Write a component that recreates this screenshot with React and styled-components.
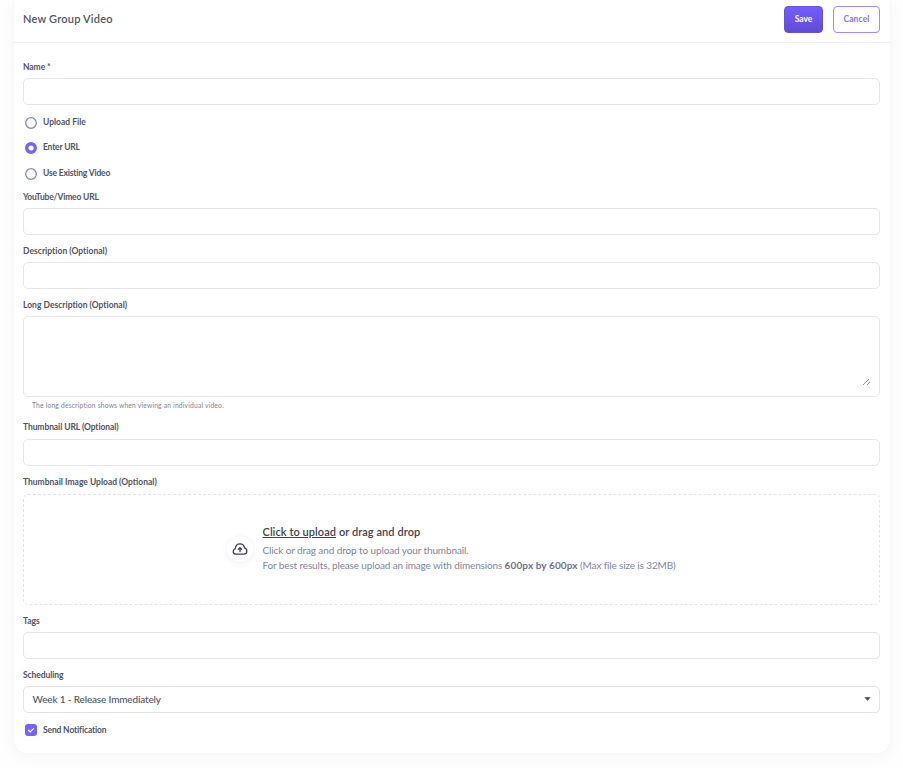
import { useState } from 'react';
import styled, { createGlobalStyle } from 'styled-components';

const GlobalStyle = createGlobalStyle`
  * {
    box-sizing: border-box;
  }
  body {
    margin: 0;
    height: 768px;
    overflow: hidden;
    background-color: #fefefe;
    font-family: Lato, "Liberation Sans", sans-serif;
    color: #505365;
  }
`;

const Card = styled.main`
  width: 878px;
  height: 754px;
  margin-left: 13px;
  background-color: #ffffff;
  border: 1px solid #f7f7f8;
  border-top: 0;
  border-radius: 0 0 14px 14px;
  box-shadow: 0 3px 14px rgba(40, 40, 60, 0.045);
`;

const CardHeader = styled.header`
  height: 43px;
  padding: 0 10px 4px 9px;
  display: flex;
  align-items: center;
  border-bottom: 1px solid #f0f0f2;
`;

const Title = styled.h1`
  flex: 1;
  margin: 0;
  font-size: 11px;
  line-height: 16px;
  font-weight: 600;
  letter-spacing: ${(props) => props.$spacing || 0}px;
`;

const Button = styled.button`
  width: ${(props) => props.$width}px;
  height: 27px;
  margin-left: 10px;
  padding: 0;
  border: 1px solid ${(props) => (props.$primary ? '#6650dd' : '#9c8cff')};
  border-radius: 4px;
  background: ${(props) => (props.$primary ? 'linear-gradient(#755cff, #614cd2)' : '#ffffff')};
  color: ${(props) => (props.$primary ? '#ffffff' : '#8572ff')};
  font-family: inherit;
  font-size: 8.5px;
  font-weight: 700;
  letter-spacing: ${(props) => props.$spacing || 0}px;
`;

const Form = styled.form`
  display: flex;
  flex-direction: column;
  padding: 17px 10px 0 9px;
`;

const Field = styled.div`
  display: flex;
  flex-direction: column;
  margin-bottom: ${(props) => props.$after ?? 9}px;
`;

const Label = styled.label`
  height: 14px;
  margin-bottom: ${(props) => props.$gap ?? 4}px;
  font-size: 8.5px;
  line-height: 14px;
  font-weight: 700;
  letter-spacing: ${(props) => props.$spacing || 0}px;
  white-space: nowrap;
`;

const Input = styled.input`
  width: 100%;
  height: 27px;
  padding: 0 9px;
  border: 1px solid #e6e6ea;
  border-radius: 5px;
  background-color: #ffffff;
  font: inherit;
  font-size: 10px;
  outline: none;
`;

const TextAreaBox = styled.div`
  height: 81px;
  display: flex;
  align-items: flex-end;
  padding: 0 8px 10px 8px;
  border: 1px solid #e6e6ea;
  border-radius: 5px;
`;

const TextArea = styled.textarea`
  flex: 1;
  height: 60px;
  padding: 0;
  border: 0;
  outline: none;
  resize: none;
  background: transparent;
  font: inherit;
  font-size: 10px;
`;

const Help = styled.p`
  margin: 2px 0 0 9px;
  height: 12px;
  font-size: 6.7px;
  line-height: 12px;
  color: #7c8297;
  letter-spacing: ${(props) => props.$spacing || 0}px;
`;

const Options = styled.div`
  display: flex;
  flex-direction: column;
  margin-bottom: 4px;
`;

const Option = styled.label`
  height: ${(props) => props.$height || 25}px;
  display: flex;
  align-items: center;
  gap: 6px;
  padding-left: 2px;
  font-size: 8.5px;
  font-weight: 700;
`;

const OptionText = styled.span`
  line-height: 12px;
  padding-bottom: ${(props) => props.$lift ?? 2}px;
  letter-spacing: ${(props) => props.$spacing || 0}px;
`;

const HiddenInput = styled.input`
  position: absolute;
  opacity: 0;
  pointer-events: none;
`;

const Check = styled.span`
  width: 12px;
  height: 12px;
  display: flex;
  align-items: center;
  justify-content: center;
  border-radius: 3px;
  background-color: #7661fd;
`;

const Dropzone = styled.div`
  height: 111px;
  display: flex;
  align-items: center;
  padding: 0 0 2px 202.5px;
  gap: 10px;
  border: 1px dashed #e4e4e8;
  border-radius: 5px;
`;

const IconCircle = styled.div`
  width: 26px;
  height: 26px;
  flex: none;
  display: flex;
  align-items: center;
  justify-content: center;
  border-radius: 50%;
  background-color: #ffffff;
  box-shadow: 0 1px 6px rgba(40, 40, 60, 0.08);
`;

const UploadText = styled.div`
  font-size: 10px;
  line-height: 15px;
  color: #7f869b;
  white-space: nowrap;
`;

const UploadTitle = styled.p`
  margin: 0 0 4px;
  font-size: 11px;
  line-height: 15px;
  font-weight: 600;
  color: #41434f;
  letter-spacing: ${(props) => props.$spacing || 0}px;
`;

const UploadLine = styled.p`
  margin: 0;
  letter-spacing: ${(props) => props.$spacing || 0}px;

  b {
    font-weight: 700;
    color: #6d7389;
    letter-spacing: 0.1px;
  }
`;

const Underlined = styled.span`
  text-decoration: underline;
  text-underline-offset: 1px;
`;

const Select = styled.div`
  height: 27px;
  display: flex;
  align-items: center;
  justify-content: space-between;
  padding: 0 8px 1px 8.5px;
  border: 1px solid #e2e2ea;
  border-radius: 5px;
  font-size: 10px;
  font-weight: 500;
  letter-spacing: ${(props) => props.$spacing || 0}px;
`;

const choices = [
  { text: 'Upload File', spacing: 0, height: 25 },
  { text: 'Enter URL', spacing: -0.18, height: 26 },
  { text: 'Use Existing Video', spacing: -0.18, height: 25 },
];

const RadioMark = ({ on }) => (
  <svg width="12" height="12" viewBox="0 0 12 12" fill="#ffffff">
    {on ? (
      <circle cx="6" cy="6" r="4.3" stroke="#7661fd" strokeWidth="3.4" />
    ) : (
      <circle cx="6" cy="6" r="5.3" stroke="#858ba3" strokeWidth="1.3" />
    )}
  </svg>
);

const CloudIcon = () => (
  <svg width="16" height="14" viewBox="0 0 16 14" fill="none" stroke="#3f414d" strokeWidth="1.3" strokeLinecap="round" strokeLinejoin="round">
    <path d="M4 12.2C2.2 12.2 1.2 10.9 1.2 9.4C1.2 8 2.1 7 3.3 6.7C3.5 3.8 5.2 1.8 8 1.8C10.6 1.8 12.2 3.4 12.5 5.8C14 6.2 14.8 7.5 14.8 9C14.8 10.8 13.6 12.2 11.8 12.2Z" />
    <path d="M8 9.5V5.8M6.3 7.2L8 5.6L9.7 7.2" />
  </svg>
);

const App = () => {
  const [source, setSource] = useState('Enter URL');
  const [notify, setNotify] = useState(true);

  return (
    <>
      <GlobalStyle />
      <Card>
        <CardHeader>
          <Title $spacing={0.2}>New Group Video</Title>
          <Button $primary $width={39}>Save</Button>
          <Button $width={47} $spacing={0.1}>Cancel</Button>
        </CardHeader>
        <Form onSubmit={(e) => e.preventDefault()}>
          <Field $after={5}>
            <Label htmlFor="name" $spacing={-0.08}>Name *</Label>
            <Input id="name" />
          </Field>
          <Options>
            {choices.map((choice) => (
              <Option key={choice.text} $height={choice.height}>
                <HiddenInput
                  type="radio"
                  name="source"
                  checked={source === choice.text}
                  onChange={() => setSource(choice.text)}
                />
                <RadioMark on={source === choice.text} />
                <OptionText $spacing={choice.spacing}>{choice.text}</OptionText>
              </Option>
            ))}
          </Options>
          <Field>
            <Label htmlFor="url" $spacing={-0.18}>YouTube/Vimeo URL</Label>
            <Input id="url" />
          </Field>
          <Field>
            <Label htmlFor="description" $spacing={0.03}>Description (Optional)</Label>
            <Input id="description" />
          </Field>
          <Field>
            <Label htmlFor="long" $spacing={0.01}>Long Description (Optional)</Label>
            <TextAreaBox>
              <TextArea id="long" />
              <svg width="9" height="9" viewBox="0 0 9 9" stroke="#959595" strokeWidth="1">
                <path d="M1 8L7 2M5 8L8 5" />
              </svg>
            </TextAreaBox>
            <Help $spacing={0.2}>The long description shows when viewing an individual video.</Help>
          </Field>
          <Field>
            <Label htmlFor="thumb" $spacing={-0.08} $gap={5}>Thumbnail URL (Optional)</Label>
            <Input id="thumb" />
          </Field>
          <Field>
            <Label as="span" $spacing={0} $gap={5}>Thumbnail Image Upload (Optional)</Label>
            <Dropzone>
              <IconCircle>
                <CloudIcon />
              </IconCircle>
              <UploadText>
                <UploadTitle $spacing={0.07}>
                  <Underlined>Click to upload</Underlined> or drag and drop
                </UploadTitle>
                <UploadLine $spacing={-0.11}>Click or drag and drop to upload your thumbnail.</UploadLine>
                <UploadLine $spacing={-0.14}>
                  For best results, please upload an image with dimensions <b>600px by 600px</b> (Max file size is 32MB)
                </UploadLine>
              </UploadText>
            </Dropzone>
          </Field>
          <Field>
            <Label htmlFor="tags">Tags</Label>
            <Input id="tags" />
          </Field>
          <Field $after={4}>
            <Label as="span" $spacing={-0.08}>Scheduling</Label>
            <Select $spacing={-0.16}>
              Week 1 - Release Immediately
              <svg width="7" height="4" viewBox="0 0 7 4">
                <path d="M0.3 0.2H6.7L3.5 3.7Z" fill="#454858" />
              </svg>
            </Select>
          </Field>
          <Option $height={26}>
            <HiddenInput type="checkbox" checked={notify} onChange={() => setNotify(!notify)} />
            <Check>
              {notify && (
                <svg width="8" height="8" viewBox="0 0 8 8" fill="none" stroke="#ffffff" strokeWidth="1.2">
                  <path d="M1.2 4L3.2 5.9L6.8 2.3" />
                </svg>
              )}
            </Check>
            <OptionText $spacing={-0.15} $lift={0}>Send Notification</OptionText>
          </Option>
        </Form>
      </Card>
    </>
  );
};

export default App;
